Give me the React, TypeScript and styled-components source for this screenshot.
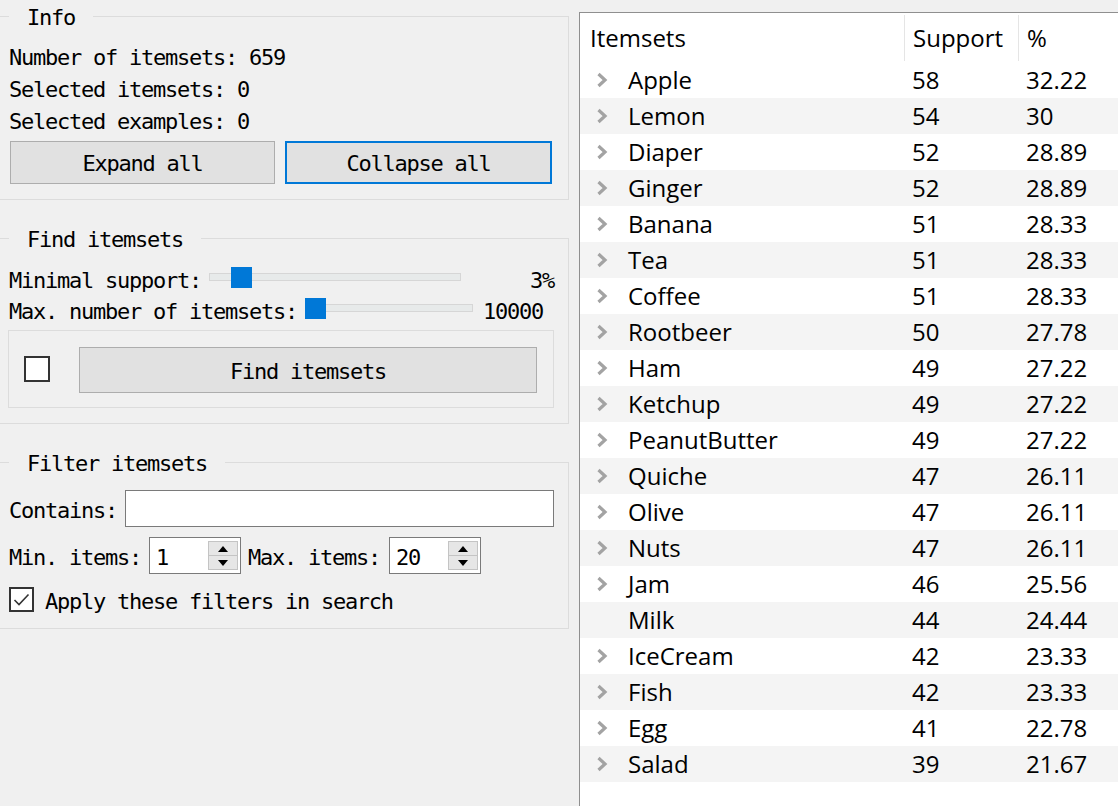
import React from "react";
import styled, { createGlobalStyle } from "styled-components";

const GlobalStyle = createGlobalStyle`
  html, body { margin: 0; padding: 0; background: #f0f0f0; overflow: hidden; }
  #root { width: 1118px; height: 806px; }
`;

const Window = styled.div`
  display: flex;
  width: 1118px;
  height: 806px;
  background: #f0f0f0;
  overflow: hidden;
`;

const LeftPanel = styled.div`
  width: 569px;
  flex: none;
  display: flex;
  flex-direction: column;
  padding-top: 4px;
  font-family: "DejaVu Sans Mono", "Liberation Mono", monospace;
  font-size: 22px;
  letter-spacing: -1.25px;
  color: #000;
`;

const GroupBox = styled.fieldset<{ $top?: number }>`
  margin: ${(p) => p.$top ?? 0}px 0 0 0;
  min-width: 0;
  border: 1px solid #dcdcdc;
  border-left: none;
  padding: 0 14px 15px 9px;
  display: flex;
  flex-direction: column;
`;

const Legend = styled.legend`
  padding: 0 18px 0 18px;
  margin: 0;
  line-height: 28px;
  height: 24px;
`;

const Body = styled.div<{ $pt: number }>`
  display: flex;
  flex-direction: column;
  padding-top: ${(p) => p.$pt}px;
`;

const InfoLine = styled.div`
  height: 32px;
  line-height: 34px;
  white-space: pre;
`;

const ButtonRow = styled.div`
  display: flex;
  gap: 10px;
  margin-top: 4px;
  padding: 0 2px 0 1px;
`;

const Button = styled.button<{ $focused?: boolean }>`
  flex: 1;
  height: 43px;
  background: #e1e1e1;
  border: ${(p) => (p.$focused ? "2px solid #0078d7" : "1px solid #adadad")};
  font: inherit;
  letter-spacing: inherit;
  color: #000;
  padding: 2px 0 0 0;
  cursor: default;
`;

const SliderRow = styled.div<{ $pr?: number }>`
  box-sizing: border-box;
  display: flex;
  align-items: center;
  height: 31px;
  padding-top: 2px;
  padding-right: ${(p) => p.$pr ?? 0}px;
`;

const Label = styled.span`
  white-space: pre;
  flex: none;
`;

const SliderTrack = styled.div<{ $w: number }>`
  position: relative;
  width: ${(p) => p.$w}px;
  height: 21px;
  flex: none;
  margin: 0 0 7px 8px;
  &::before {
    content: "";
    position: absolute;
    left: 0;
    right: 0;
    top: 6px;
    height: 6px;
    background: #e7eaea;
    border: 1px solid #d6d6d6;
  }
`;

const SliderHandle = styled.div`
  position: absolute;
  top: 0;
  width: 21px;
  height: 21px;
  background: #0078d7;
`;

const SliderValue = styled.span<{ $w: number }>`
  width: ${(p) => p.$w}px;
  margin-left: auto;
  text-align: right;
  white-space: pre;
`;

const InnerBox = styled.div`
  margin-top: 4px;
  margin-left: -1px;
  height: 76px;
  border: 1px solid #dcdcdc;
  display: flex;
  align-items: center;
  padding: 0 16px 0 15px;
  gap: 29px;
`;

const CheckBox = styled.div<{ $size: number }>`
  width: ${(p) => p.$size}px;
  height: ${(p) => p.$size}px;
  box-sizing: border-box;
  border: 2px solid #333;
  background: #fff;
  flex: none;
  display: flex;
  align-items: center;
  justify-content: center;
`;

const BigButton = styled(Button)`
  height: 46px;
  margin-top: 2px;
`;

const FieldRow = styled.div`
  display: flex;
  align-items: center;
  height: 37px;
  gap: 8px;
  & > span { padding-top: 3px; }
`;

const TextField = styled.div`
  flex: 1;
  height: 37px;
  box-sizing: border-box;
  border: 1px solid #7a7a7a;
  background: #fff;
`;

const SpinRow = styled.div`
  display: flex;
  align-items: center;
  height: 37px;
  margin-top: 10px;
  & > span { padding-top: 3px; }
`;

const SpinBox = styled.div<{ $ml: number; $mr: number }>`
  width: 92px;
  height: 37px;
  box-sizing: border-box;
  border: 1px solid #7a7a7a;
  background: #fff;
  display: flex;
  align-items: center;
  margin: 0 ${(p) => p.$mr}px 0 ${(p) => p.$ml}px;
  padding: 3px 2px 3px 6px;
`;

const SpinText = styled.span`
  flex: 1;
  padding-top: 4px;
`;

const SpinButtons = styled.div`
  width: 30px;
  height: 100%;
  display: flex;
  flex-direction: column;
`;

const SpinButton = styled.div`
  flex: 1;
  background: #e6e6e6;
  border: 1px solid #c4c4c4;
  display: flex;
  align-items: center;
  justify-content: center;
  & + & { border-top: none; }
`;

const CheckRow = styled.div`
  display: flex;
  align-items: center;
  height: 27px;
  margin-top: 12px;
  gap: 11px;
  & > span { padding-top: 3px; }
`;

/* ---------- table ---------- */

const TableFrame = styled.div`
  flex: 1;
  margin: 12px -4px 0 10px;
  border: 1px solid #8f8f8f;
  border-right: none;
  border-bottom: none;
  background: #fff;
  font-family: "Open Sans", "Noto Sans", sans-serif;
  font-size: 24px;
  color: #000;
  display: flex;
  flex-direction: column;
`;

const Grid = styled.div`
  display: grid;
  grid-template-columns: 324px 114px 1fr;
`;

const HeaderRow = styled(Grid)`
  height: 49px;
`;

const HeaderCell = styled.div<{ $first?: boolean }>`
  display: flex;
  align-items: center;
  padding-left: ${(p) => (p.$first ? 10 : 8)}px;
  border-left: ${(p) => (p.$first ? "none" : "1px solid #e5e5e5")};
  margin: 2px 0 1px 0;
  padding-bottom: 2px;
`;

const Row = styled(Grid)<{ $alt: boolean }>`
  height: 36px;
  background: ${(p) => (p.$alt ? "#f4f4f4" : "#fff")};
`;

const ItemCell = styled.div`
  display: flex;
  align-items: center;
  padding-left: 16px;
  gap: 20px;
  & > span:last-child { padding-bottom: 2px; }
`;

const Cell = styled.div`
  display: flex;
  align-items: center;
  padding-left: 8px;
  padding-bottom: 2px;
`;

const ChevronSlot = styled.span`
  width: 12px;
  height: 16px;
  display: flex;
  flex: none;
`;

const Chevron = () => (
  <svg width="12" height="16" viewBox="0 0 12 16">
    <polyline points="2.5,2 9,8 2.5,14" fill="none" stroke="#a3a3a3" strokeWidth="3.2" />
  </svg>
);

const rows: [string, number, string, boolean][] = [
  ["Apple", 58, "32.22", true],
  ["Lemon", 54, "30", true],
  ["Diaper", 52, "28.89", true],
  ["Ginger", 52, "28.89", true],
  ["Banana", 51, "28.33", true],
  ["Tea", 51, "28.33", true],
  ["Coffee", 51, "28.33", true],
  ["Rootbeer", 50, "27.78", true],
  ["Ham", 49, "27.22", true],
  ["Ketchup", 49, "27.22", true],
  ["PeanutButter", 49, "27.22", true],
  ["Quiche", 47, "26.11", true],
  ["Olive", 47, "26.11", true],
  ["Nuts", 47, "26.11", true],
  ["Jam", 46, "25.56", true],
  ["Milk", 44, "24.44", false],
  ["IceCream", 42, "23.33", true],
  ["Fish", 42, "23.33", true],
  ["Egg", 41, "22.78", true],
  ["Salad", 39, "21.67", true],
];

const Arrow = ({ up }: { up: boolean }) => (
  <svg width="10" height="6" viewBox="0 0 10 6">
    <polygon points={up ? "0,6 10,6 5,0" : "0,0 10,0 5,6"} fill="#000" />
  </svg>
);

export default function App() {
  return (
    <>
      <GlobalStyle />
      <Window>
        <LeftPanel>
          <GroupBox>
            <Legend>Info</Legend>
            <Body $pt={13}>
              <InfoLine>Number of itemsets: 659</InfoLine>
              <InfoLine>Selected itemsets: 0</InfoLine>
              <InfoLine>Selected examples: 0</InfoLine>
              <ButtonRow>
                <Button>Expand all</Button>
                <Button $focused>Collapse all</Button>
              </ButtonRow>
            </Body>
          </GroupBox>

          <GroupBox $top={26}>
            <Legend>Find itemsets</Legend>
            <Body $pt={14}>
              <SliderRow>
                <Label>Minimal support:</Label>
                <SliderTrack $w={252}>
                  <SliderHandle style={{ left: 22 }} />
                </SliderTrack>
                <SliderValue $w={84}>3%</SliderValue>
              </SliderRow>
              <SliderRow $pr={11}>
                <Label>Max. number of itemsets:</Label>
                <SliderTrack $w={168}>
                  <SliderHandle style={{ left: 0 }} />
                </SliderTrack>
                <SliderValue $w={60}>10000</SliderValue>
              </SliderRow>
              <InnerBox>
                <CheckBox $size={26} />
                <BigButton>Find itemsets</BigButton>
              </InnerBox>
            </Body>
          </GroupBox>

          <GroupBox $top={26}>
            <Legend>Filter itemsets</Legend>
            <Body $pt={16}>
              <FieldRow>
                <Label>Contains:</Label>
                <TextField />
              </FieldRow>
              <SpinRow>
                <Label>Min. items:</Label>
                <SpinBox $ml={8} $mr={7}>
                  <SpinText>1</SpinText>
                  <SpinButtons>
                    <SpinButton><Arrow up /></SpinButton>
                    <SpinButton><Arrow up={false} /></SpinButton>
                  </SpinButtons>
                </SpinBox>
                <Label>Max. items:</Label>
                <SpinBox $ml={9} $mr={0}>
                  <SpinText>20</SpinText>
                  <SpinButtons>
                    <SpinButton><Arrow up /></SpinButton>
                    <SpinButton><Arrow up={false} /></SpinButton>
                  </SpinButtons>
                </SpinBox>
              </SpinRow>
              <CheckRow>
                <CheckBox $size={25}>
                  <svg width="17" height="14" viewBox="0 0 17 14">
                    <polyline points="1.5,7 6,11.5 15.5,1.5" fill="none" stroke="#333" strokeWidth="1.6" />
                  </svg>
                </CheckBox>
                <Label>Apply these filters in search</Label>
              </CheckRow>
            </Body>
          </GroupBox>
        </LeftPanel>

        <TableFrame>
          <HeaderRow>
            <HeaderCell $first>Itemsets</HeaderCell>
            <HeaderCell>Support</HeaderCell>
            <HeaderCell>%</HeaderCell>
          </HeaderRow>
          {rows.map(([name, sup, pct, exp], i) => (
            <Row key={name} $alt={i % 2 === 1}>
              <ItemCell>
                <ChevronSlot>{exp && <Chevron />}</ChevronSlot>
                <span>{name}</span>
              </ItemCell>
              <Cell>{sup}</Cell>
              <Cell>{pct}</Cell>
            </Row>
          ))}
        </TableFrame>
      </Window>
    </>
  );
}
